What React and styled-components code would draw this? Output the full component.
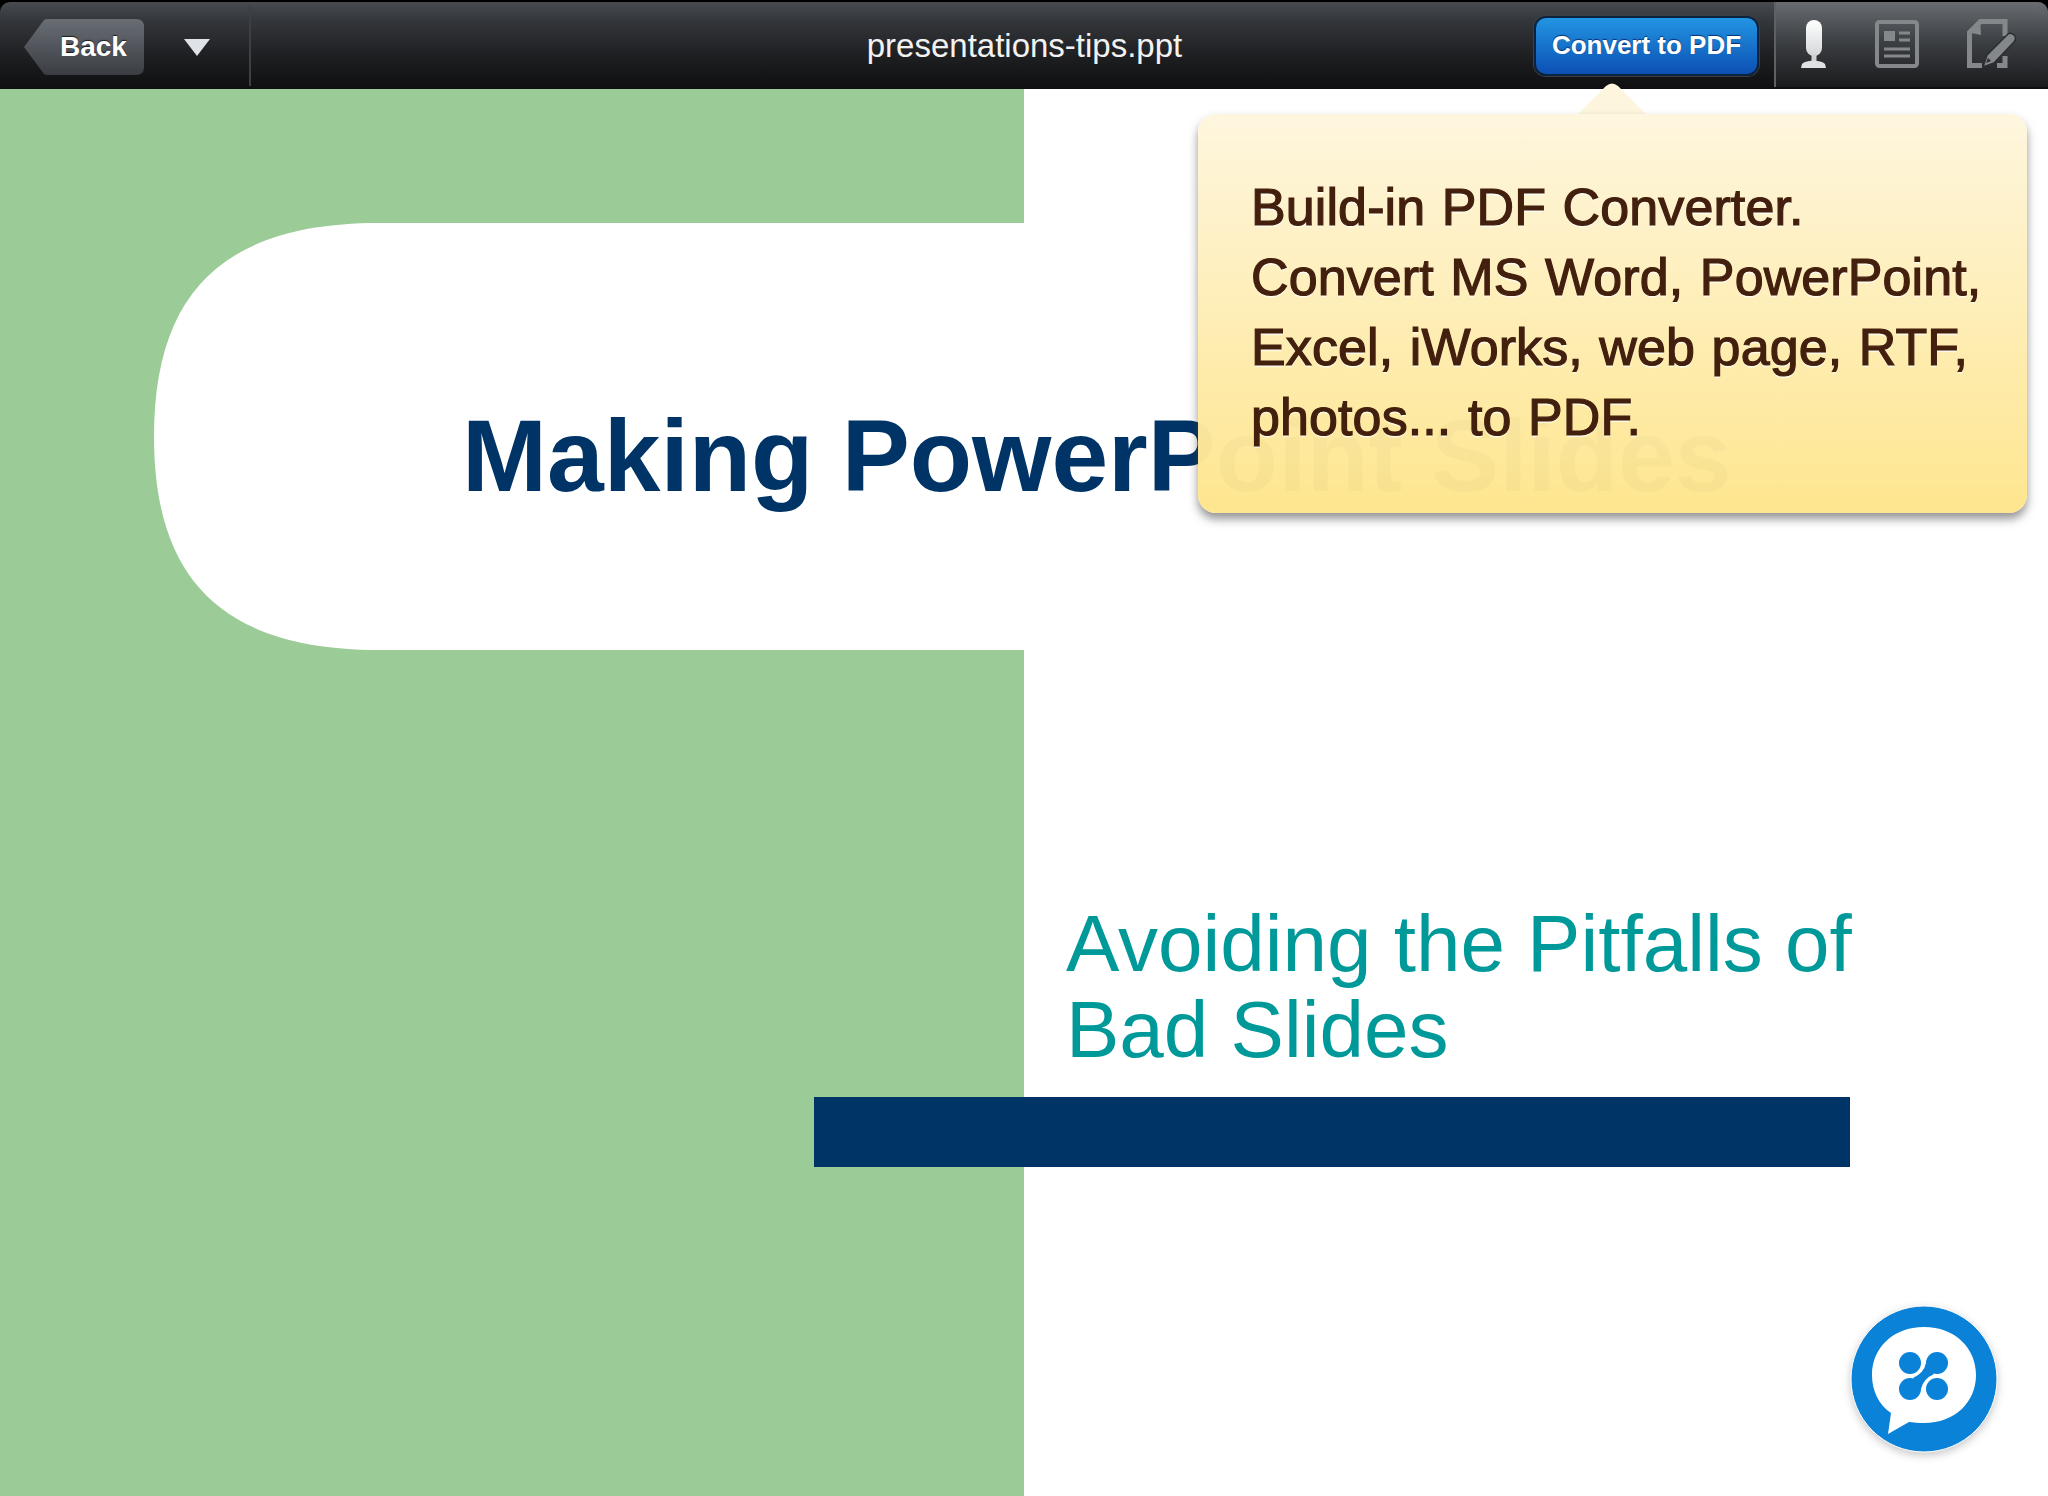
import React from 'react';
import styled, { createGlobalStyle } from 'styled-components';

const GlobalStyle = createGlobalStyle`
  html, body {
    margin: 0;
    padding: 0;
    background: #000;
  }
  body {
    width: 2048px;
    height: 1496px;
    overflow: hidden;
    font-family: "Liberation Sans", Arial, sans-serif;
  }
`;

const Page = styled.div`
  position: relative;
  width: 2048px;
  height: 1496px;
  display: flex;
  flex-direction: column;
  background: #000;
`;

const Toolbar = styled.header`
  flex: none;
  height: 87px;
  margin-top: 2px;
  display: flex;
  align-items: stretch;
  border-radius: 10px 10px 0 0;
  background: linear-gradient(#474b50 0%, #33363a 22%, #1f2023 60%, #0f0f11 100%);
  box-shadow: 0 1px 0 #6f7472;
`;

const LeftGroup = styled.div`
  flex: none;
  width: 251px;
  margin: 4px 0 3px;
  padding: 13px 0 11px 24px;
  box-sizing: border-box;
  display: flex;
  align-items: center;
  border-right: 2px solid #3c3f43;
`;

const BackButton = styled.button`
  width: 120px;
  height: 56px;
  margin: 0;
  padding: 0 0 0 36px;
  border: 0;
  text-align: left;
  color: #fff;
  font: bold 28px "Liberation Sans", Arial, sans-serif;
  text-shadow: 0 -1px 1px rgba(0, 0, 0, 0.7);
  background: linear-gradient(#696e75, #3a3d42);
  clip-path: path('M0 28 L20 1 Q21 0 24 0 L112 0 Q120 0 120 8 L120 48 Q120 56 112 56 L24 56 Q21 56 20 55 Z');
`;

const DropArrow = styled.span`
  width: 0;
  height: 0;
  margin-left: 40px;
  border-left: 13px solid transparent;
  border-right: 13px solid transparent;
  border-top: 17px solid #dfe2e6;
`;

const FileName = styled.div`
  flex: 1;
  display: flex;
  align-items: center;
  justify-content: center;
  padding-left: 264px;
  color: #f2f2f2;
  font-family: "Liberation Sans", Arial, sans-serif;
  font-size: 33px;
`;

const ConvertButton = styled.button`
  flex: none;
  align-self: center;
  width: 225px;
  height: 60px;
  margin: 0 15px 0 0;
  padding: 0;
  border: 2px solid #0c2340;
  border-radius: 12px;
  color: #fff;
  font: bold 26px "Liberation Sans", Arial, sans-serif;
  text-shadow: 0 -1px 1px rgba(0, 30, 90, 0.8);
  background: linear-gradient(#2295e2, #0c50b4);
  box-shadow: 0 0 0 1px #3b4046;
`;

const RightGroup = styled.div`
  flex: none;
  width: 274px;
  margin-bottom: 2px;
  box-sizing: border-box;
  display: flex;
  align-items: center;
  justify-content: space-between;
  padding: 0 32px 2px 25px;
  border-left: 2px solid #5c6166;
  border-top-right-radius: 10px;
  background: linear-gradient(#696d72 0%, #3d4044 45%, #1a1b1d 100%);
`;

const Slide = styled.main`
  position: relative;
  flex: 1;
  overflow: hidden;
  background: linear-gradient(90deg, #9bcc98 1024px, #fff 1024px);
`;

const TitlePill = styled.div`
  position: absolute;
  left: 154px;
  top: 134px;
  width: 870px;
  height: 427px;
  background: #fff;
  clip-path: path('M870 0 L225 0 C66 0 0 73 0 213.5 C0 354 66 427 225 427 L870 427 Z');
`;

const SlideTitle = styled.h1`
  position: absolute;
  left: 462px;
  top: 316px;
  margin: 0;
  font: bold 102px/1 "Liberation Sans", Arial, sans-serif;
  color: #003366;
  white-space: nowrap;
`;

const SlideSubtitle = styled.h2`
  position: absolute;
  left: 1066px;
  top: 812px;
  margin: 0;
  font: 400 80px/86px "Liberation Sans", Arial, sans-serif;
  color: #009999;
`;

const SlideBar = styled.div`
  position: absolute;
  left: 814px;
  top: 1008px;
  width: 1036px;
  height: 70px;
  background: #003366;
`;

const Callout = styled.aside`
  position: absolute;
  left: 1198px;
  top: 114px;
  width: 829px;
  height: 399px;
  box-sizing: border-box;
  padding: 58px 20px 0 53px;
  border-radius: 18px;
  background: linear-gradient(rgba(254, 246, 222, 0.975), rgba(254, 229, 140, 0.975));
  box-shadow: 0 6px 10px rgba(60, 60, 60, 0.55);
  color: #43200e;
  font: 52px/70px "Liberation Sans", Arial, sans-serif;
  letter-spacing: 0.1px;
  word-spacing: 2px;
  text-shadow: 0 2px 1px rgba(255, 255, 255, 0.8);
  -webkit-text-stroke: 1.2px #43200e;
  white-space: nowrap;
`;

const CalloutArrow = styled.div`
  position: absolute;
  left: 1577px;
  top: 83px;
  width: 70px;
  height: 32px;
  background: #fef5de;
  clip-path: path('M0 32 L29 3 Q35 -2 41 3 L70 32 Z');
`;

const Badge = styled.svg`
  position: absolute;
  left: 1851px;
  top: 1217px;
  width: 146px;
  height: 146px;
  overflow: visible;
  filter: drop-shadow(0 3px 4px rgba(0, 0, 0, 0.22));
`;

const MicIcon = () => (
  <svg width="25" height="48" viewBox="0 0 25 48">
    <defs>
      <linearGradient id="mic" x1="0" y1="0" x2="0" y2="1">
        <stop offset="0" stopColor="#fff" />
        <stop offset="1" stopColor="#d4d6d8" />
      </linearGradient>
    </defs>
    <rect x="5" y="0" width="16" height="36" rx="8" fill="url(#mic)" />
    <rect x="10.5" y="35" width="5" height="7" fill="#cfd1d3" />
    <path d="M0 48 L1 44 Q3 41 12.5 40.5 Q22 41 24 44 L25 48 Z" fill="#dfe1e3" />
  </svg>
);

const ArticleIcon = () => (
  <svg width="44" height="48" viewBox="0 0 44 48">
    <rect x="2" y="2" width="40" height="44" rx="2.5" fill="none" stroke="#85888b" strokeWidth="4" />
    <rect x="9" y="11" width="11" height="10" fill="#85888b" />
    <path d="M24 13h11M24 20h11M9 29h26M9 36h26" stroke="#85888b" strokeWidth="3" />
  </svg>
);

const EditIcon = () => (
  <svg width="49" height="49" viewBox="0 0 49 49">
    <path
      d="M38 17 V2.5 H13.5 L2.5 13.5 V46.5 H15 M38 37 V46.5 H30"
      fill="none"
      stroke="#85888b"
      strokeWidth="5"
    />
    <path d="M13 0 L0 13 L14 16 Z" fill="#85888b" />
    <path
      d="M16 48 L20 36 L41 15 Q44 13 47 16 Q50 19 47 23 L27 44 Z"
      fill="#85888b"
      stroke="#2b2d30"
      strokeWidth="1.5"
    />
    <path d="M19 44 L21 39 L24 42 Z" fill="#2b2d30" />
  </svg>
);

export default function App() {
  return (
    <Page>
      <GlobalStyle />
      <Toolbar>
        <LeftGroup>
          <BackButton>Back</BackButton>
          <DropArrow />
        </LeftGroup>
        <FileName>presentations-tips.ppt</FileName>
        <ConvertButton>Convert to PDF</ConvertButton>
        <RightGroup>
          <MicIcon />
          <ArticleIcon />
          <EditIcon />
        </RightGroup>
      </Toolbar>
      <Slide>
        <TitlePill />
        <SlideTitle>Making PowerPoint Slides</SlideTitle>
        <SlideSubtitle>
          Avoiding the Pitfalls of
          <br />
          Bad Slides
        </SlideSubtitle>
        <SlideBar />
        <Badge viewBox="0 0 146 146">
          <circle cx="73" cy="73" r="73" fill="#0a82d8" stroke="#fff" strokeWidth="1" />
          <path
            d="M73 21 C104 21 125 42 125 69 C125 96 104 117 73 117 C67 117 62 116.5 58 116 L37 128 L40 107 C28 99 21 85 21 69 C21 42 42 21 73 21 Z"
            fill="#fff"
          />
          <circle cx="59" cy="57" r="11" fill="#0a82d8" />
          <circle cx="86" cy="57" r="11" fill="#0a82d8" />
          <circle cx="59" cy="83" r="11" fill="#0a82d8" />
          <circle cx="86" cy="83" r="11" fill="#0a82d8" />
          <path d="M75 57 Q73 67 62 72 L70 83 Q72 73 83 68 Z" fill="#0a82d8" />
        </Badge>
      </Slide>
      <CalloutArrow />
      <Callout>
        Build-in PDF Converter.
        <br />
        Convert MS Word, PowerPoint,
        <br />
        Excel, iWorks, web page, RTF,
        <br />
        photos... to PDF.
      </Callout>
    </Page>
  );
}
